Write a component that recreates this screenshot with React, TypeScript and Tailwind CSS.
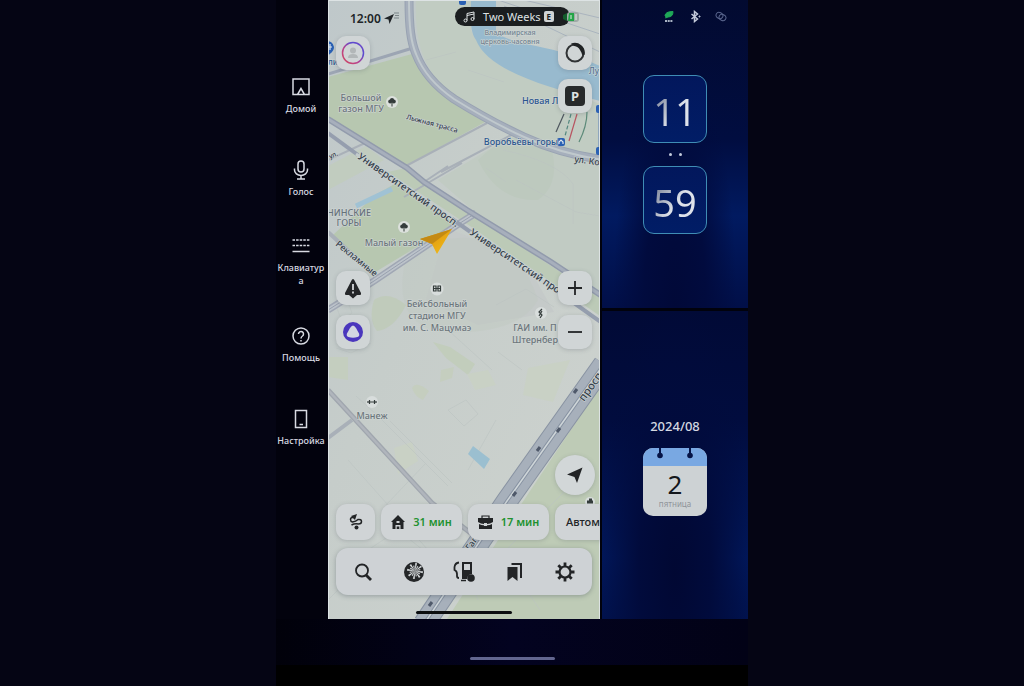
import type { ReactNode } from "react";

const uiFont = "font-['Noto_Sans','Open_Sans',sans-serif]";

type StreetLabel = { text: string; x: number; y: number; angle: number; size: number };

const streets: StreetLabel[] = [
  { text: "Университетский просп.", x: 29, y: 158, angle: 35, size: 10 },
  { text: "Университетский прос", x: 141, y: 234, angle: 34, size: 10 },
  { text: "Лыжная трасса", x: 78, y: 119, angle: 15, size: 7 },
  { text: "ул. Ко", x: 246, y: 162, angle: 8, size: 9 },
  { text: "ул.", x: 2, y: 159, angle: -24, size: 7 },
  { text: "Рекламные", x: 7, y: 245, angle: 39, size: 9 },
  { text: "просп", x: 256, y: 402, angle: -54, size: 11 },
  { text: "Гаг", x: 142, y: 551, angle: -54, size: 9 },
];

type PlaceLabel = { lines: string[]; x: number; y: number; size: number; color: string; step?: number };

const places: PlaceLabel[] = [
  { lines: ["Владимирская", "церковь-часовня"], x: 182, y: 35, size: 7, color: "#718392", step: 9 },
  { lines: ["Большой", "газон МГУ"], x: 33, y: 101, size: 9, color: "#6c757b", step: 11 },
  { lines: ["Новая Ли"], x: 215, y: 104, size: 9, color: "#2b558e" },
  { lines: ["Воробьёвы горы"], x: 193, y: 145, size: 9, color: "#2b558e" },
  { lines: ["Лу"], x: 266, y: 74, size: 8, color: "#4f7196" },
  { lines: ["НИНСКИЕ", "ГОРЫ"], x: 21, y: 216, size: 9, color: "#66717a", step: 10 },
  { lines: ["Малый газон"], x: 66, y: 246, size: 9, color: "#6c757b" },
  { lines: ["Бейсбольный", "стадион МГУ", "им. С. Мацумаэ"], x: 109, y: 307, size: 9, color: "#6c757b", step: 12 },
  { lines: ["ГАИ им. П", "Штернбер"], x: 207, y: 331, size: 9, color: "#6c757b", step: 12 },
  { lines: ["Манеж"], x: 44, y: 419, size: 9, color: "#6c757b" },
  { lines: ["ли"], x: 5, y: 65, size: 8, color: "#2b558e" },
];

function Tree({ x, y }: { x: number; y: number }) {
  return (
    <g transform={`translate(${x} ${y})`}>
      <circle r="6" fill="#dce1dd" />
      <circle cx="-1.8" cy="-.6" r="2" fill="#343c3b" />
      <circle cx="1.8" cy="-.6" r="2" fill="#343c3b" />
      <circle cy="-2" r="2.1" fill="#343c3b" />
      <path d="M0 0v4.5" stroke="#343c3b" strokeWidth="1" />
    </g>
  );
}

function CityMap() {
  const arc = "M81-2C81 28 83 42 88 54C96 75 110 88 126 99C150 114 172 126 196 137C222 149 248 156 276 160";
  return (
    <svg
      className="absolute inset-0 size-full"
      viewBox="0 0 272 619"
      preserveAspectRatio="xMidYMid slice"
      role="img"
      aria-label="Карта"
      fontFamily="'Noto Sans','Open Sans',sans-serif"
    >
      <defs>
        <linearGradient id="land" x1="0" y1="0" x2="1" y2="1">
          <stop offset="0" stopColor="#bfc8ca" />
          <stop offset=".4" stopColor="#c6cdca" />
          <stop offset="1" stopColor="#ced3cf" />
        </linearGradient>
        <linearGradient id="arrow" x1="0" y1="0" x2="1" y2="1">
          <stop offset="0" stopColor="#b97f15" />
          <stop offset=".5" stopColor="#e6a512" />
          <stop offset="1" stopColor="#f2c21f" />
        </linearGradient>
      </defs>
      <rect width="272" height="619" fill="url(#land)" />

      {/* parks */}
      <g fill="#b7c7b0">
        <path d="M0 77L84 54C95 78 122 103 157 122L76 167L0 119Z" />
        <path d="M88 0H143V30C150 52 190 74 272 104V156C220 148 160 118 126 95C98 76 86 45 88 0Z" fill="#c1ccc2" />
        <path d="M47 195L70 182L127 224L44 274L4 236Z" />
        <path d="M78 168L98 184L272 298V316L142 226L128 217L60 172Z" fill="#bccab7" />
        <path d="M272 386V619H119L192 506Z" fill="#becbb6" />
        <path d="M0 166L38 146L56 160L0 190Z" fill="#c1ccbf" />
        <path d="M183 136L272 160V292L148 213L110 180Z" fill="#c1cbc3" />
        <path d="M105 342L122 347L147 364L140 375L118 358Z" fill="#c2cdbc" />
        <path d="M84 388Q88 380 101 391L95 400Q87 397 84 388Z" fill="#c5cebf" />
        <path d="M113 370L126 367L124 378L112 382Z" fill="#c5cebf" />
        <path d="M0 357H20V380L0 377Z" fill="#c4cebf" />
        <path d="M139 374L160 370L168 385L147 390Z" fill="#c9d1c5" />
        <path d="M46 300Q60 290 78 305Q66 329 49 331Q40 320 46 300Z" fill="#c0cbbb" />
        <path d="M200 368L242 360L225 402L195 395Z" fill="#c9d1c5" />
        <path d="M66 448L84 442L90 461L70 474Z" fill="#c9d1c5" />
        <path d="M150 160Q190 120 224 150Q232 185 210 200Q170 202 150 160Z" fill="#bdc9be" />
      </g>
      <path d="M118 228L98 300L150 325L226 312L205 275L150 240Z" fill="#c5cac9" />
      <path d="M80 250Q180 210 210 300Q190 336 110 332Q60 320 80 250Z" fill="#bcc7bd" opacity=".3" />
      <g fill="none" stroke="#bcc4c2" strokeWidth="1" opacity=".6">
        <path d="M8 306l11-7 5 14-10 8zM8 348l15 5 20-10M120 410l18-10 12 14-14 12zM188 180l60 32 24 4M175 150q55 12 70 34v40M168 305l30-16 28 18M62 421l62 62M28 396l22 20 70 70M20 460l80 90M10 570l60-40 30 24M168 560l70-70M150 600l-8-20 30-30 40 60M0 600l36-36" />
        <path d="M120 330l44 40M170 352l24 18M98 60l30-8M140 70l36 12M158 168l20 14M58 505l40-42M140 470l28-50" />
      </g>

      {/* water */}
      <path d="M143-2H168V33C190 47 224 44 272 66V101C214 86 160 70 148 40C141 30 143 14 143-2Z" fill="#98bace" />
      <path d="M170 0L272 34M176 6L272 52M196 0L272 18" stroke="#aab4be" strokeWidth="1" fill="none" />
      <path d="M28 206L64 189" stroke="#a0c2d4" strokeWidth="5" />
      <path d="M145 446L162 459L156 469L140 454Z" fill="#9bbfd0" />

      {/* minor roads */}
      <g fill="none" stroke="#a9b0b8" strokeWidth="2">
        <path d="M76 167L159 123M113 172L183 135M0 160L37 143M76 197L134 163M96 182L120 166" />
        <path d="M0 74L88 47" stroke="#9ca5b3" strokeWidth="3" />
        <path d="M0 232L52 280M0 438L24 420" strokeWidth="4" />
      </g>
      <g fill="none">
        <path d="M0 390L104 503L158 545" stroke="#a0a6ae" strokeWidth="5" />
        <path d="M0 390L104 503L158 545" stroke="#b0b5bc" strokeWidth="2.5" />
        <path d="M0 310L46 281L129 225L148 213" stroke="#a0a7b4" strokeWidth="7" />
        <path d="M0 310L46 281L129 225L148 213" stroke="#bcc3ca" strokeWidth="4" />
        <path d="M0 310L46 281L129 225L148 213" stroke="#98a0ae" strokeWidth="1" />
      </g>

      {/* avenues */}
      <g fill="none">
        <path d={arc} stroke="#98a2b2" strokeWidth="9" />
        <path d={arc} stroke="#a6afbc" strokeWidth="7" />
        <path d={arc} stroke="#c0c9cd" strokeWidth="2" />
        <path d="M0 119L79 168L96 182L139 210L223 262L274 296" stroke="#929bac" strokeWidth="6" />
        <path d="M0 119L79 168L96 182L139 210L223 262L274 296" stroke="#a7afbc" strokeWidth="3" />
        <path d="M0 133L30 155" stroke="#959eae" strokeWidth="4" />
        <path d="M124 219L144 233M232 293L274 323" stroke="#959eae" strokeWidth="4" />
        <path d="M28 154L128 222M142 232L232 293" stroke="#c2cbcc" strokeWidth="3" />
      </g>

      {/* highway */}
      <g fill="none">
        <path d="M276 364L179 501L96 624" stroke="#8993a2" strokeWidth="22" />
        <path d="M276 364L179 501L96 624" stroke="#a7b0bb" strokeWidth="20" />
        <path d="M276 364L179 501L96 624" stroke="#8792a2" strokeWidth="3.500" />
        <path d="M276 364L179 501L96 624" stroke="#ced5d8" strokeWidth="1.500" />
        <path d="M246 393l3-4M209 451l3-4M185 496l3-4M229 432l3-4M101 606l3-4" stroke="#4f596a" strokeWidth="3" />
      </g>

      {/* transit */}
      <g fill="none" strokeWidth="1.2">
        <path d="M236 114l-8 18" stroke="#4d555e" />
        <path d="M243 114l-6 22" stroke="#53877f" strokeDasharray="4 2" />
        <path d="M249 114l-8 27" stroke="#b85460" />
        <path d="M259 112q0 14-8 30" stroke="#5c8a79" />
        <path d="M271 108v40" stroke="#6d8cba" />
      </g>
      <g fill="#2a60b3">
        <rect x="229" y="138" width="8" height="8" rx="2" />
        <rect x="268" y="105" width="6" height="8" rx="2" />
        <rect x="268" y="147" width="6" height="8" rx="2" />
        <rect x="131" y="-3" width="7" height="8" rx="2" />
        <path d="M-2 41a7 7 0 0 1 8 6c0 5-5 7-6 9l-2-2z" />
      </g>
      <path d="M231 144v-2l2-2 2 2v2M-1 47h5M2 44v6" stroke="#dbe5ee" strokeWidth="1.2" fill="none" />

      <Tree x={64} y={102} />
      <Tree x={76} y={227} />
      <g stroke="#343c3b" fill="none" strokeWidth="1.2">
        <circle cx="109" cy="289" r="6.500" fill="#d8dddc" stroke="none" />
        <path d="M105.500 286h2.500v5h-2.500zM110 286h2.500v5h-2.500zM105 288.500h8" />
        <circle cx="213" cy="313" r="6" fill="#d8dddc" stroke="none" />
        <path d="M214 309l-3 3 3 3-2 3M211 316l3-5" />
        <circle cx="44" cy="402" r="6" fill="#d8dddc" stroke="none" />
        <path d="M42 402h4M41.500 400v4M46.500 400v4M40 401v2M48 401v2" />
        <circle cx="262" cy="502" r="5" fill="#d8dddc" stroke="none" />
        <path d="M259 502h6M261 500h3" strokeWidth="3" />
      </g>

      {places.map((p) => (
        <text
          key={p.lines[0]}
          textAnchor="middle"
          fontSize={p.size}
          fontWeight="500"
          fill={p.color}
          stroke="#cfd6d4"
          strokeWidth="1.2"
          paintOrder="stroke"
        >
          {p.lines.map((line, i) => (
            <tspan key={line} x={p.x} y={p.y + i * (p.step ?? 0)}>
              {line}
            </tspan>
          ))}
        </text>
      ))}
      {streets.map((s) => (
        <text
          key={s.text}
          transform={`translate(${s.x} ${s.y}) rotate(${s.angle})`}
          fontSize={s.size}
          fontWeight="500"
          fill="#35404a"
          stroke="#cbd3d2"
          strokeWidth="1.2"
          paintOrder="stroke"
        >
          {s.text}
        </text>
      ))}

      <path d="M92 239L124 229L109 254L104 244Z" fill="url(#arrow)" />
      <path d="M92 239L124 229L104 244Z" fill="#c48a12" />
      <path d="M.5 619V.5H272M271.500 0V619" fill="none" stroke="#dde3e4" strokeWidth="1" />
    </svg>
  );
}

function MapButton({ label, children }: { label: string; children: ReactNode }) {
  return (
    <button
      aria-label={label}
      className="flex size-[34px] items-center justify-center rounded-[10px] bg-[#d0d5d6] text-[#222426] shadow-[0_1px_4px_rgba(70,80,90,0.25)]"
    >
      {children}
    </button>
  );
}

function Chip({ children, className = "" }: { children: ReactNode; className?: string }) {
  return (
    <button
      className={`flex h-9 shrink-0 items-center gap-2 rounded-[11px] bg-[#d0d4d6] text-[#222426] shadow-[0_1px_4px_rgba(70,80,90,0.25)] ${className}`}
    >
      {children}
    </button>
  );
}

function StatusBar() {
  return (
    <div className="flex h-9 items-start justify-between pl-[22px] pr-5 pt-[7px]">
      <div className="flex items-center text-[#202427]">
        <span className="text-[12px] font-semibold leading-6">12:00</span>
        <svg className="ml-[3px]" width="18" height="14" viewBox="0 0 18 14" aria-hidden="true">
          <path d="M0 6.500L10 2L5.500 12L4.500 7.500Z" fill="currentColor" />
          <path d="M10 1h5M11 3.500h4M10 6h5" stroke="#7b8588" strokeWidth="1" />
        </svg>
      </div>
      <div className="flex items-center">
        <div className="z-10 flex h-[19px] w-[115px] items-center gap-2 rounded-full bg-[#1b1e20] pl-2 text-[#dfe3e4]">
          <svg width="12" height="12" viewBox="0 0 12 12" fill="none" stroke="currentColor" aria-hidden="true">
            <path d="M4 9.500V2.500L11 1v7M4 4.500L11 3" />
            <circle cx="2.500" cy="9.500" r="1.500" />
            <circle cx="9.500" cy="8" r="1.500" />
          </svg>
          <span className="flex items-center gap-[3px] whitespace-nowrap text-[11px] leading-4">
            Two Weeks
            <span className="flex h-[11px] w-[10px] items-center justify-center rounded-[2px] bg-[#cfd3d4] text-[8px] font-bold leading-none text-[#1b1e20]">
              E
            </span>
          </span>
        </div>
        <svg className="z-20 -ml-4" width="26" height="12" viewBox="0 0 26 12" aria-hidden="true">
          <rect x="13" y="1" width="12" height="10" rx="3" fill="#9eaaa6" />
          <path d="M15 2h5v8h-6z" fill="#23a548" />
          <path d="M9 4l4-2v8l-4-2z" fill="#125c2b" />
          <path d="M17 4v4M22 3v6" stroke="#e3ece5" />
        </svg>
      </div>
    </div>
  );
}

const rays = Array.from({ length: 16 }, (_, i) => {
  const a = (i * Math.PI) / 8 + 0.15;
  const b = 0.12;
  const r = i % 2 ? 5.5 : 8;
  return `M12 10L${12 + r * Math.cos(a - b)} ${10 + r * Math.sin(a - b)}L${12 + r * Math.cos(a + b)} ${10 + r * Math.sin(a + b)}Z`;
}).join("");

function MapPanel() {
  return (
    <main className="relative min-w-0 flex-1 overflow-hidden">
      <CityMap />
      <div className="relative flex h-full flex-col px-2">
        <div className="-mx-2">
          <StatusBar />
        </div>
        <div className="flex items-start justify-between">
          <MapButton label="Профиль">
            <svg width="24" height="24" viewBox="0 0 24 24" fill="none" aria-hidden="true">
              <defs>
                <linearGradient id="ring" x1="1" y1="0" x2="0" y2="1">
                  <stop offset="0" stopColor="#7447c4" />
                  <stop offset=".3" stopColor="#5a4bd0" />
                  <stop offset=".6" stopColor="#b8438f" />
                  <stop offset="1" stopColor="#d2455b" />
                </linearGradient>
              </defs>
              <circle cx="12" cy="12" r="10.500" stroke="url(#ring)" strokeWidth="1.500" />
              <circle cx="12" cy="9.500" r="3" fill="#b2b7b8" />
              <path d="M7 17q0-4 5-4t5 4z" fill="#b2b7b8" />
            </svg>
          </MapButton>
          <div className="flex flex-col gap-[9px]">
            <MapButton label="Север">
              <svg width="22" height="22" viewBox="0 0 22 22" fill="none" aria-hidden="true">
                <circle cx="11" cy="11" r="8.500" stroke="#303335" strokeWidth="2" />
                <path d="M7 1.500A10 10 0 0 1 20.500 13Q16 13 13 7.500Q11 4 7 1.500Z" fill="#202325" />
                <path d="M9 4Q14 4 16 8Q18 11 18 13A7 7 0 1 1 9 4Z" fill="#d0d5d6" />
              </svg>
            </MapButton>
            <MapButton label="Парковки">
              <span className="flex size-5 items-center justify-center rounded-[4px] bg-[#27292b] text-[13px] font-bold leading-none text-[#dde1e2]">
                P
              </span>
            </MapButton>
          </div>
        </div>

        <div className="mt-[158px] flex items-start justify-between">
          <div className="flex flex-col gap-[10px]">
            <MapButton label="Дорожные события">
              <svg width="18" height="21" viewBox="0 0 18 21" aria-hidden="true">
                <path d="M9 1Q10 1 10.500 2.500L17 15Q17.500 17 16 17H2Q.5 17 1 15L7.500 2.500Q8 1 9 1ZM5 17h8l-4 3.500z" fill="#242628" />
                <path d="M9 6v6M9 13.500v2" stroke="#d5d9db" strokeWidth="1.800" />
              </svg>
            </MapButton>
            <MapButton label="Алиса">
              <svg width="20" height="20" viewBox="0 0 20 20" aria-hidden="true">
                <circle cx="10" cy="10" r="10" fill="#4a36bd" />
                <path d="M10 3.500Q11.500 3.500 13 6L16 11.500Q17 14 14.500 15Q10 16.500 5.500 15Q3 14 4 11.500L7 6Q8.500 3.500 10 3.500Z" fill="#d3d6e2" />
              </svg>
            </MapButton>
          </div>
          <div className="flex flex-col gap-[10px]">
            <MapButton label="Приблизить">
              <svg width="14" height="14" viewBox="0 0 14 14" stroke="currentColor" strokeWidth="1.800" aria-hidden="true">
                <path d="M7 0v14M0 7h14" />
              </svg>
            </MapButton>
            <MapButton label="Отдалить">
              <svg width="14" height="14" viewBox="0 0 14 14" stroke="currentColor" strokeWidth="1.800" aria-hidden="true">
                <path d="M0 7h14" />
              </svg>
            </MapButton>
          </div>
        </div>

        <button
          aria-label="Моё местоположение"
          className="-mr-[3px] mb-[9px] ml-auto mt-auto flex size-10 items-center justify-center rounded-full bg-[#d2d7d8] shadow-[0_1px_4px_rgba(70,80,90,0.25)]"
        >
          <svg width="18" height="18" viewBox="0 0 18 18" aria-hidden="true">
            <path d="M16.500 1.500L11 17L8.500 11L1 8.500Z" fill="#222426" />
          </svg>
        </button>

        <div className="-mr-2 mb-2 flex gap-[6px]">
          <Chip className="w-[39px] justify-center">
            <svg width="16" height="18" viewBox="0 0 16 18" fill="none" aria-label="Маршрут">
              <path d="M6 4.500H4.500Q2.500 4.500 2.500 6.500T4.500 9Q8 8.500 10 6.500Q13.500 6 13.500 8.500T10.500 11Q7 10 3.500 12" stroke="#222426" strokeWidth="1.500" />
              <path d="M3 3l6-2-2 6z" fill="#222426" />
              <circle cx="8.500" cy="14.500" r="2" fill="#222426" />
            </svg>
          </Chip>
          <Chip className="w-[81px] justify-center">
            <svg width="14" height="14" viewBox="0 0 14 14" aria-hidden="true">
              <path fillRule="evenodd" d="M7 0L14 7H12.500V14H1.500V7H0ZM5.500 6v2h3V6zM4.500 10v4h1.200v-2.500h2.600V14h1.200v-4z" fill="#222426" />
            </svg>
            <span className="whitespace-nowrap text-[11px] font-semibold leading-4 text-[#21912f]">31 мин</span>
          </Chip>
          <Chip className="w-[81px] justify-center">
            <svg width="15" height="14" viewBox="0 0 15 14" aria-hidden="true">
              <path d="M4 3V1h7v2" fill="none" stroke="#222426" strokeWidth="1.200" />
              <path d="M0 3h15v4q-3 2-6 2V8H6v1Q3 9 0 7zM1 9q3 1.500 5 1.300V11h3v-.7Q12 10.300 14 9v5H1z" fill="#222426" />
            </svg>
            <span className="whitespace-nowrap text-[11px] font-semibold leading-4 text-[#21912f]">17 мин</span>
          </Chip>
          <Chip className="w-[90px] pl-[11px]">
            <span className="whitespace-nowrap text-[11px] font-medium leading-4">Автомойки</span>
          </Chip>
        </div>

        <nav
          aria-label="Карта"
          className="flex h-[47px] items-center justify-between rounded-[12px] bg-[#ced2d5] px-4 shadow-[0_1px_5px_rgba(70,80,90,0.4)]"
        >
          <button aria-label="Поиск">
            <svg width="22" height="22" viewBox="0 0 22 22" fill="none" stroke="#222426" aria-hidden="true">
              <circle cx="10" cy="9.500" r="6" strokeWidth="1.800" />
              <path d="M14 14l5 5" strokeWidth="2.800" />
            </svg>
          </button>
          <button aria-label="Музыка">
            <svg width="22" height="22" viewBox="0 0 22 22" aria-hidden="true">
              <circle cx="11" cy="11" r="10" fill="#242628" />
              <path d={rays} fill="#d4d8da" />
            </svg>
          </button>
          <button aria-label="Заправки">
            <svg width="22" height="22" viewBox="0 0 22 22" fill="none" stroke="#222426" aria-hidden="true">
              <path d="M6 1.500Q2 2 1.500 6v3Q4 10 4 13v2Q4 17 6 17" strokeWidth="1.800" />
              <path fillRule="evenodd" d="M9 1h10v12a5 5 0 0 0-5 5H9zM11 3v6h6V3z" fill="#222426" stroke="none" />
              <path d="M8 19.500h5" strokeWidth="1.500" />
              <circle cx="18" cy="17" r="3.800" fill="#222426" stroke="none" />
            </svg>
          </button>
          <button aria-label="Закладки">
            <svg width="22" height="22" viewBox="0 0 22 22" aria-hidden="true">
              <path d="M3.500 6h10v14l-5-4-5 4z" fill="#222426" />
              <path d="M7.500 3h9.500V17" fill="none" stroke="#222426" strokeWidth="2" />
            </svg>
          </button>
          <button aria-label="Настройки">
            <svg width="22" height="22" viewBox="0 0 22 22" fill="none" stroke="#222426" aria-hidden="true">
              <circle cx="11" cy="11" r="5.500" strokeWidth="2.200" />
              <path
                d="M11 1.500v4M11 16.500v4M1.500 11h4M16.500 11h4M4.300 4.300l2.800 2.800M14.900 14.900l2.800 2.800M4.300 17.700l2.800-2.800M14.900 7.100l2.800-2.800"
                strokeWidth="2.800"
              />
            </svg>
          </button>
        </nav>
        <div className="mx-auto mb-[5px] mt-4 h-[3px] w-24 shrink-0 rounded-full bg-[#0b0d0f]" />
      </div>
    </main>
  );
}

function SideItem({ label, children }: { label: string; children: ReactNode }) {
  return (
    <button className="flex h-[83px] w-full flex-col items-center justify-center gap-[5px]">
      <svg width="20" height="20" viewBox="0 0 20 20" fill="none" stroke="currentColor" strokeWidth="1.500" aria-hidden="true">
        {children}
      </svg>
      <span className="w-full break-all text-center text-[9px] font-medium leading-[13px]">{label}</span>
    </button>
  );
}

function SideNav() {
  return (
    <nav aria-label="Меню" className="w-[52px] shrink-0 bg-[#02020d] pr-[2px] pt-[54px] text-[#d8dae2]">
      <SideItem label="Домой">
        <path d="M6 17.500H2V2h16v15.500h-4M10 11.500l-3.500 6h7z" />
      </SideItem>
      <SideItem label="Голос">
        <rect x="7" y="1" width="6" height="11" rx="3" />
        <path d="M3.500 8.500V10a6.500 5.500 0 0 0 13 0V8.500M10 15.500V19M6 19h8" />
      </SideItem>
      <SideItem label="Клавиатура">
        <path d="M1.500 4h17M1.500 9.500h17" strokeDasharray="2.500 1.100" />
        <path d="M1.500 15.500h17" />
      </SideItem>
      <SideItem label="Помощь">
        <circle cx="10" cy="10" r="8" />
        <path d="M7.500 8a2.500 2.500 0 1 1 4 2Q10 11 10 12.500M10 14v1.500" />
      </SideItem>
      <SideItem label="Настройка">
        <path d="M4.500 1.500h11v17h-11zM8.500 15.500h3.500" />
      </SideItem>
    </nav>
  );
}

function ClockTile({ value }: { value: string }) {
  return (
    <div className="flex h-[68px] w-16 shrink-0 items-center justify-center rounded-[11px] border border-[#3f8db5] bg-linear-to-b from-[#02175c] to-[#011d66]">
      <span className="bg-linear-to-br from-[#8e96a8] from-25% to-[#dde2ea] to-55% bg-clip-text pt-1 text-[38px] leading-[60px] text-transparent">
        {value}
      </span>
    </div>
  );
}

function Widgets() {
  return (
    <aside className="grid w-[148px] shrink-0 grid-rows-[1fr_1fr] gap-[3px] bg-[#01020c] pl-[2px]">
      <section
        aria-label="Часы"
        className="flex flex-col items-center bg-[radial-gradient(ellipse_at_50%_100%,#010938_0%,#010b3e_30%,transparent_60%),linear-gradient(180deg,#020a30_0%,#010d40_45%,#011a60_70%,#010f48_100%)]"
      >
        <div className="flex h-[75px] w-full shrink-0 items-start justify-end gap-[14px] pr-[21px] pt-[10px]">
          <svg width="12" height="13" viewBox="0 0 12 13" aria-label="AQS">
            <path d="M2 6Q2 1.500 10 1.500Q10 7 5 7L2.500 8M3 6.500l5-3" fill="#1fa958" stroke="#1fa958" />
            <path d="M2 11h8" stroke="#a9b4c4" strokeWidth="2" strokeDasharray="2 .7" />
          </svg>
          <svg width="12" height="13" viewBox="0 0 12 13" fill="none" stroke="#c4cada" aria-label="Bluetooth">
            <path d="M2.500 4l6 5-3 2.500V1.500l3 2.500-6 5" strokeWidth="1.500" />
            <circle cx="10.500" cy="6.500" r=".6" fill="#c4cada" />
          </svg>
          <svg width="12" height="13" viewBox="0 0 12 13" fill="none" stroke="#59658d" aria-label="Подключение">
            <ellipse cx="4.500" cy="5.500" rx="3.500" ry="3" transform="rotate(25 4.500 5.500)" />
            <ellipse cx="7.500" cy="7.500" rx="3.500" ry="3" transform="rotate(25 7.500 7.500)" />
          </svg>
        </div>
        <ClockTile value="11" />
        <div className="flex h-[23px] shrink-0 items-center gap-[7px]">
          <span className="size-[3px] rounded-full bg-[#c3cbdc]" />
          <span className="size-[3px] rounded-full bg-[#c3cbdc]" />
        </div>
        <ClockTile value="59" />
      </section>
      <section
        aria-label="Календарь"
        className="flex flex-col items-center bg-[radial-gradient(ellipse_at_50%_85%,#010833_0%,#010b3c_35%,transparent_75%),linear-gradient(180deg,#010a36_0%,#010c3e_35%,#01185c_80%,#01134f_100%)] pt-[105px]"
      >
        <p className="text-[13px] font-medium leading-5 text-[#d5d9e2]">2024/08</p>
        <div className="mt-3 flex h-[68px] w-16 flex-col items-center overflow-hidden rounded-[10px] bg-[#cdd2d4]">
          <svg className="h-[18px] w-full shrink-0 bg-[#79a8e2]" viewBox="0 0 64 18" aria-hidden="true">
            <path d="M17 0v6M47 0v6" stroke="#061446" strokeWidth="2" />
            <circle cx="17" cy="7.500" r="2.800" fill="#061446" />
            <circle cx="47" cy="7.500" r="2.800" fill="#061446" />
          </svg>
          <span className="text-[26px] leading-9 text-[#14171b]">2</span>
          <span className="-mt-[2px] text-[8px] leading-[8px] text-[#90959a]">пятница</span>
        </div>
      </section>
    </aside>
  );
}

export default function App() {
  return (
    <div className={`flex min-h-screen justify-center bg-[#050514] ${uiFont}`}>
      <div className="flex min-h-screen w-full max-w-[472px] flex-col bg-black">
        <div className="flex min-h-[619px] flex-1">
          <SideNav />
          <MapPanel />
          <Widgets />
        </div>
        <footer className="flex h-[46px] items-end justify-center bg-linear-to-r from-[#01010a] via-[#030320] to-[#020216] pb-[5px]">
          <div className="h-[3px] w-[85px] rounded-full bg-[#62668f]" />
        </footer>
        <div className="h-[21px] bg-black" />
      </div>
    </div>
  );
}
